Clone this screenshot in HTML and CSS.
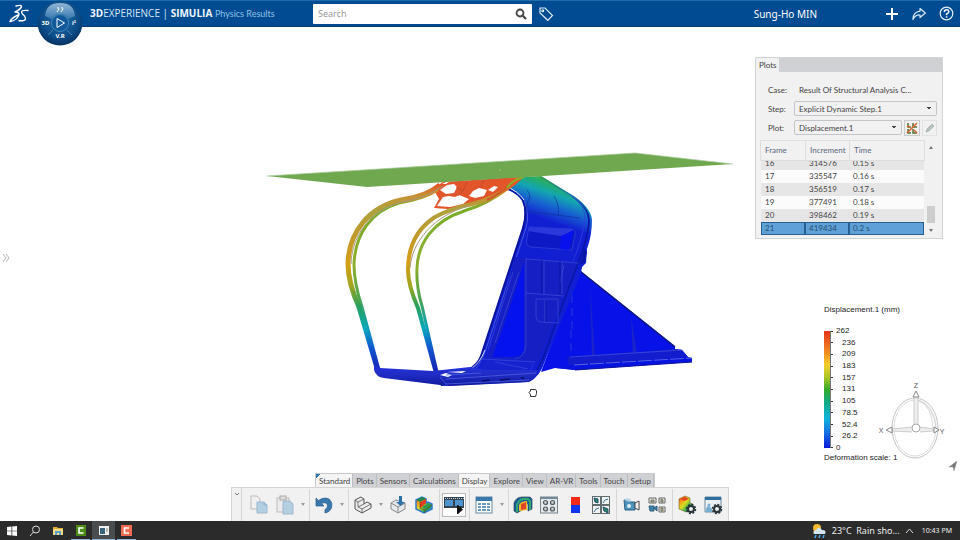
FILE: index.html
```html
<!DOCTYPE html>
<html lang="en">
<head>
<meta charset="utf-8">
<title>3DEXPERIENCE | SIMULIA Physics Results</title>
<link rel="stylesheet" href="styles.css">
</head>
<body>
<header class="topbar">
  <div class="brand">
    <svg class="logo" width="20" height="20" viewBox="0 0 20 20" fill="none" stroke="#fff" stroke-width="1.400" stroke-linecap="round" stroke-linejoin="round"><path d="M7 2Q12.500 .5 12.500 2.500Q12 5 6 8Q11.500 8 9.500 12Q6.500 17 1 17.500Q3 13.500 9 11"/><path d="M19 6.500Q12.500 6 12.500 8Q12.500 9.500 15.500 12Q18 16 14 16.800H10"/></svg>
    <h1 class="title"><b>3D</b>EXPERIENCE | <b>SIMULIA</b> <span class="app">Physics Results</span></h1>
    <button class="compass" aria-label="Compass">
      <svg width="46" height="46" viewBox="0 0 46 46">
        <defs>
          <radialGradient id="ball" cx=".5" cy=".4" r=".6"><stop offset="0" stop-color="#2272ac"/><stop offset=".7" stop-color="#0c4c88"/><stop offset="1" stop-color="#063262"/></radialGradient>
          <linearGradient id="shine" x1="0" y1="0" x2="0" y2="1"><stop offset="0" stop-color="#a7c8e2"/><stop offset="1" stop-color="#3c7db2"/></linearGradient>
        </defs>
        <circle cx="23" cy="23" r="22.500" fill="url(#ball)"/>
        <path d="M8 16Q9 3 23 3T38 16L31 19Q29 14 23 14T15 19Z" fill="url(#shine)" opacity=".85"/>
        <circle cx="23" cy="23" r="8.500" fill="#11599a" stroke="#4f92c4" stroke-width=".8"/>
        <path d="M11 35L16 30M35 35L30 30" stroke="#4f92c4" stroke-width=".8"/>
        <path d="M20 18.500L27.500 23L20 27.500Z" fill="none" stroke="#fff"/>
        <path d="M20 8Q22 7 22 9L20 12M24 8Q26 7 26 9L24 12" fill="none" stroke="#fff"/>
        <g class="ball-text"><text x="8.500" y="25">3D</text><text x="37" y="25">i²</text><text x="23" y="38">V.R</text></g>
      </svg>
    </button>
  </div>
  <form class="search">
    <input type="search" placeholder="Search" aria-label="Search">
    <button type="button" aria-label="Run search"><svg width="12" height="12" viewBox="0 0 12 12" fill="none" stroke="#444"><circle cx="5" cy="5" r="3.500" stroke-width="1.800"/><path d="M7.800 7.800L11 11" stroke-width="2.200"/></svg></button>
  </form>
  <button class="icon-btn tag" aria-label="Tags"><svg width="16" height="16" viewBox="0 0 16 16" fill="none" stroke="#d9ecfa" stroke-width="1.200"><path d="M2 2L7 2L14.500 9.500L9.800 14.300L2 7Z"/><circle cx="4.800" cy="4.700" r=".9"/></svg></button>
  <div class="account">
    <span class="user">Sung-Ho MIN</span>
    <button class="icon-btn" aria-label="Add"><svg width="14" height="14" viewBox="0 0 14 14" stroke="#fff" stroke-width="2"><path d="M7 1V13M1 7H13"/></svg></button>
    <button class="icon-btn" aria-label="Share"><svg width="14" height="14" viewBox="0 0 14 14" fill="none" stroke="#d9ecfa" stroke-width="1.200" stroke-linejoin="round"><path d="M8 1.500L13.300 6L8 10.500V8Q3.500 7.500 1 12.500Q1 5 8 4.200Z"/></svg></button>
    <button class="icon-btn" aria-label="Help"><svg width="15" height="15" viewBox="0 0 15 15" fill="none" stroke="#e6f3fc" stroke-width="1.200"><circle cx="7.500" cy="7.500" r="6.300"/><path d="M5.300 6Q5.300 3.700 7.600 3.700T9.800 5.800Q9.800 7 7.600 8V9.300M7.600 10.300V11.800" stroke-width="1.600"/></svg></button>
  </div>
</header>

<main class="workspace">
  <button class="expander" aria-label="Open side panel"><svg width="8" height="10" viewBox="0 0 8 10" fill="none" stroke="#b4b4b4"><path d="M1 1L4 5L1 9M4 1L7 5L4 9"/></svg></button>
  <div class="scene">
    <svg width="480" height="260" viewBox="260 145 480 260" role="img" aria-label="Displacement plot of the seat model">
      <defs>
        <linearGradient id="rail" gradientUnits="userSpaceOnUse" x1="0" y1="184" x2="0" y2="372">
          <stop offset="0" stop-color="#e45324"/><stop offset=".06" stop-color="#c89030"/><stop offset=".14" stop-color="#aea13c"/><stop offset=".28" stop-color="#c1992c"/><stop offset=".42" stop-color="#d69e16"/><stop offset=".54" stop-color="#a2a51e"/><stop offset=".65" stop-color="#27a25b"/><stop offset=".77" stop-color="#07a7bd"/><stop offset=".87" stop-color="#1158cf"/><stop offset="1" stop-color="#1720b5"/>
        </linearGradient>
        <linearGradient id="rail-in" gradientUnits="userSpaceOnUse" x1="0" y1="190" x2="0" y2="372">
          <stop offset="0" stop-color="#d98b28"/><stop offset=".1" stop-color="#78ad28"/><stop offset=".42" stop-color="#8cae2c"/><stop offset=".6" stop-color="#4ba552"/><stop offset=".75" stop-color="#0aa0b5"/><stop offset=".87" stop-color="#1158cf"/><stop offset="1" stop-color="#1720b5"/>
        </linearGradient>
        <linearGradient id="seat" gradientUnits="userSpaceOnUse" x1="543" y1="174" x2="529" y2="214">
          <stop offset="0" stop-color="#55ab35"/><stop offset=".17" stop-color="#25ad6b"/><stop offset=".38" stop-color="#13a5b2"/><stop offset=".64" stop-color="#1767ce"/><stop offset="1" stop-color="#111fd2"/>
        </linearGradient>
        <linearGradient id="edge" gradientUnits="userSpaceOnUse" x1="0" y1="178" x2="0" y2="215"><stop offset="0" stop-color="#2a9a55"/><stop offset=".5" stop-color="#1a78b4"/><stop offset="1" stop-color="#0a16a6"/></linearGradient>
        <linearGradient id="tube" x1="0" y1="0" x2="0" y2="1"><stop offset="0" stop-color="#2634da"/><stop offset=".45" stop-color="#202bc4"/><stop offset="1" stop-color="#101a9c"/></linearGradient>
      </defs>
      <!-- base wedge -->
      <path d="M579 270L675 346V349L682 350L688 357L692 358V362L575 370L555 368L541 372Z" fill="#0612e8"/>
      <path d="M580 271L675 347" stroke="#101878" stroke-width="1.400"/>
      <path d="M590 282L595 358L600 364L592 363ZM631 315L637 354L643 360L633 360Z" fill="#1a24c9"/>
      <path d="M567 357L675 349L682 350L688 357L569 366Z" fill="#131dcd"/>
      <path d="M570 357L682 350" stroke="#4656dd" stroke-width=".7"/>
      <path d="M573 365L692 358V362L575 370L556 368Z" fill="#0713e0"/>
      <path d="M574 365L692 358" stroke="#6c7ade" stroke-width=".8" stroke-dasharray="14 2"/>
      <path d="M575 370L692 362" stroke="#10169a"/>
      <path d="M572 282V329M571 330V356" stroke="#2b3bd6" stroke-width="1" stroke-dasharray="8 5"/>
      <!-- seat shell -->
      <path d="M505 187Q512 180 520 177L541 176Q558 187 572 195Q591 207 592 220Q592 235 587 249L586 263L582 267L581 273L545 361Q540 377 529 382L441 386L437 371L470 368Q479 362 482 352L522 230Q527 212 522 201Q518 194 505 188Z" fill="url(#seat)"/>
      <path d="M541 177L572 196Q589 207 589 222Q588 235 582 252L550 339Q539 372 532 376" fill="none" stroke="url(#edge)" stroke-width="1.800"/>
      <path d="M572 196Q586 207 585 220Q583 233 577 251L543 340Q534 367 526 376" fill="none" stroke="#2e40dd" stroke-width=".8"/>
      <path d="M505 188Q518 192 523 200Q528 212 523 228L481 356Q478 365 468 370" fill="none" stroke="#0a149f" stroke-width="2"/>
      <path d="M505 186Q518 191 524 200" fill="none" stroke="#e8f2fb" stroke-width="1"/>
      <path d="M524 200Q530 215 526 228L485 352Q480 365 474 370" fill="none" stroke="#4a5edb" stroke-width=".9"/>
      <path d="M485 350Q480 363 471 369" fill="none" stroke="#dfe5fa" stroke-width=".9"/>
      <path d="M530 197Q526 202 526 211L580 218M554 196Q560 206 558 216M527 190Q530 193 530 198" fill="none" stroke="#0e2c99" stroke-width=".6"/>
      <path d="M529 227L570 229Q577 230 575 235L572 250L531 247Q525 246 527 238Z" fill="#0c19c5" stroke="#2e42d2" stroke-width=".8"/>
      <path d="M529 227L574 229L568 235L560 236L528 231Z" fill="#2b39db"/>
      <path d="M561 236L574 230L569 250L560 249Z" fill="#0710ee"/>
      <path d="M515 257L578 262L551 329L538 362L487 359Z" fill="#151fc4"/>
      <path d="M524 262V347Q524 356 515 357L492 357Q506 322 524 262Z" fill="#0413ee"/>
      <path d="M526 258V345Q525 357 515 359M526 259L578 263M526 293L564 296M544 260V294M562 261V294M564 265L560 283M536 299H558V323L540 322Q536 321 536 317ZM545 300V322" fill="none" stroke="#3040d2" stroke-width="1"/>
      <path d="M542 260V294M560 261V294M546 301V322" stroke="#0b139b" stroke-width=".8"/>
      <path d="M487 357L538 361L523 372L476 370Z" fill="#1522ce"/>
      <path d="M482 359L535 362M495 362L528 369M513 272L488 350M519 272L495 343" fill="none" stroke="#3d4cdc" stroke-width=".7"/>
      <path d="M584 248L587 252L585 262L580 265Z" fill="#0b14a9"/>
      <!-- mesh -->
      <path fill="#e2542a" d="M432 189L443 182L518 177Q508 187 494 195Q477 203 462 206L448 209L434 208L439 199L435 192Z"/>
      <g fill="#fff">
        <path d="M440 190L447 185L454 184L457 187L454 193L446 194Z"/>
        <path d="M437 206L443 197L449 196L455 197L459 195L469 199L463 204L450 207Z"/>
        <path d="M469 196L473 191L479 188L487 190L484 196L475 198Z"/>
        <path d="M488 190L494 186L498 187L493 192Z"/>
        <path d="M442 184L446 182L449 182L446 184Z"/>
      </g>
      <path d="M456 187L463 191L467 182M463 191L458 196M480 187L484 180" fill="none" stroke="#b5452a" stroke-width=".7"/>
      <!-- roll rails -->
      <g fill="none">
        <path d="M438 190Q423 199 399 203C371 211 355 235 354 264Q354 283 362 307L379 370" stroke="url(#rail-in)" stroke-width="3"/>
        <path d="M440 185Q426 197 401 200C369 207 349 232 348 263Q348 283 359 307L378 371" stroke="url(#rail)" stroke-width="5"/>
        <path d="M443 186Q426 198 402 202C371 210 352 234 351 264" stroke="#a79a7d" stroke-width="1"/>
        <path d="M513 184Q491 203 464 211C433 221 418 243 417 268Q416 286 422 306L437 372" stroke="url(#rail-in)" stroke-width="3"/>
        <path d="M520 178Q500 197 472 204Q452 208 435 217C415 230 408 250 408 270Q408 285 418 308L436 373" stroke="url(#rail)" stroke-width="4"/>
        <path d="M468 206C434 216 412 241 410 268" stroke="#a79a7d" stroke-width="1"/>
        <path d="M511 184Q500 194 487 200" stroke="#d05b27" stroke-width="2"/>
        <path d="M507 188Q512 180 524 177" stroke="#8bae25" stroke-width="2"/>
      </g>
      <!-- floor frame -->
      <path d="M374 366L380 368L433 371L470 367L486 370L538 370Q535 381 527 382L450 386L440 385L384 378Q376 377 374 370Z" fill="url(#tube)"/>
      <path d="M440 375L446 373L452 375L448 377ZM447 372L466 371L462 373Z" fill="#fff"/>
      <path d="M446 379L536 373M440 377L446 384M445 384L529 380M446 375L481 373" stroke="#4e5fde" stroke-width=".8"/>
      <path d="M482 381L490 380M500 380L510 379M521 378L524 378" stroke="#090e68" stroke-width="1.400"/>
      <!-- plane -->
      <path d="M267 176L635 153L733 164L367 187Z" fill="#70a84f"/>
      <path d="M267 176L635 153L733 164" fill="none" stroke="#a5c99a" stroke-width=".7"/>
      <circle cx="500" cy="170" r=".7" fill="#b6c98e"/>
      <!-- grab cursor -->
      <path d="M530.500 396.500V394.500L529 392.500L530.500 391V389.500H535.500L536.500 391V393.500L535.500 396.500Z" fill="#fff" stroke="#333" stroke-width="1" stroke-linejoin="round"/>
    </svg>
  </div>

  <aside class="side">
    <section class="panel">
      <div class="panel-bar"><h2 class="panel-tab">Plots</h2></div>
      <div class="panel-body">
        <div class="field"><span>Case:</span><span class="case">Result Of Structural Analysis C...</span></div>
        <div class="field"><label for="step">Step:</label><select id="step"><option>Explicit Dynamic Step.1</option></select></div>
        <div class="field"><label for="plot">Plot:</label><select id="plot"><option>Displacement.1</option></select>
          <button class="tool" aria-label="Plot options"><svg width="14" height="14" viewBox="0 0 14 14" fill="none"><path d="M3 2V6H6M8 2V6H12M3 8V12H6M8 8V12H12" stroke="#4e7139" stroke-width="1.500"/><path d="M2 12L12 2M2 5L5 6M9 9L12 12" stroke="#e05f2c" stroke-width="1.500"/></svg></button>
          <button class="tool" aria-label="Edit plot"><svg width="12" height="12" viewBox="0 0 12 12"><path d="M2 10L3 7L8 2L10 4L5 9Z" fill="#b7c3c3" stroke="#92a0a0" stroke-width=".6"/></svg></button>
        </div>
        <div class="frames">
          <table>
            <thead><tr><th>Frame</th><th>Increment</th><th>Time</th></tr></thead>
            <tbody>
              <tr class="odd"><td>16</td><td>314576</td><td>0.15 s</td></tr>
              <tr><td>17</td><td>335547</td><td>0.16 s</td></tr>
              <tr class="odd"><td>18</td><td>356519</td><td>0.17 s</td></tr>
              <tr><td>19</td><td>377491</td><td>0.18 s</td></tr>
              <tr class="odd"><td>20</td><td>398462</td><td>0.19 s</td></tr>
              <tr class="selected"><td>21</td><td>419434</td><td>0.2 s</td></tr>
            </tbody>
          </table>
          <div class="scroll"><i class="up"></i><i class="thumb"></i><i class="down"></i></div>
        </div>
      </div>
    </section>

    <section class="legend">
      <h2>Displacement.1 (mm)</h2>
      <div class="scale">
        <div class="ramp"></div>
        <ol><li class="end">262</li><li>236</li><li>209</li><li>183</li><li>157</li><li>131</li><li>105</li><li>78.5</li><li>52.4</li><li>26.2</li><li class="end">0</li></ol>
      </div>
      <svg class="rose" width="80" height="92" viewBox="878 380 80 92" fill="none" stroke="#c4c4c4">
        <ellipse cx="915" cy="428" rx="23" ry="30"/><ellipse cx="915" cy="428" rx="21" ry="28" stroke="#dcdcdc"/>
        <path d="M917 400Q932 405 933 428M919 400Q934 408 936 428" stroke="#cfcfcf" stroke-width=".8"/>
        <path d="M914 425V397H918V425M912 427L892 429V431L912 432M920 427L934 429V431L920 432" fill="#eee" stroke="#c2c2c2" stroke-width=".8"/>
        <path d="M916 391L919 397H913ZM886 430L892 427V433ZM939 430L934 427V433Z" fill="#fff" stroke="#888"/>
        <circle cx="916" cy="428" r="4" fill="#fff" stroke="#aaa"/>
        <g class="axis"><text x="916" y="388">Z</text><text x="881" y="433">X</text><text x="942" y="434">Y</text></g>
        <path d="M949 467L957 461L954 471L953 467Z" fill="#777" stroke="#999" stroke-width=".5"/>
      </svg>
      <p>Deformation scale: 1</p>
    </section>
  </aside>
</main>

<section class="dock">
  <nav class="tabs">
    <button class="light first">Standard</button><button>Plots</button><button>Sensors</button><button>Calculations</button><button class="light">Display</button><button>Explore</button><button>View</button><button>AR-VR</button><button>Tools</button><button>Touch</button><button>Setup</button>
  </nav>
  <div class="toolbar">
    <button class="fold" aria-label="Collapse"><svg width="6" height="4" viewBox="0 0 6 4" fill="none" stroke="#777"><path d="M1 1L3 3L5 1"/></svg></button>
    <button aria-label="Copy"><svg width="20" height="20" viewBox="0 0 20 20"><path d="M2 1H8L11 4V14H2Z" fill="#f0f0f0" stroke="#bbb"/><path d="M8 7H15L18 10V18H8Z" fill="#b5cfe2" stroke="#9ab8cf"/><path d="M15 7V10H18" fill="none" stroke="#8fb0c9"/></svg></button>
    <button aria-label="Paste"><svg width="20" height="20" viewBox="0 0 20 20"><rect x="2" y="3" width="12" height="14" fill="#ececec" stroke="#bbb"/><rect x="5" y="1" width="6" height="4" fill="#ddd" stroke="#aaa"/><path d="M8 6H15L18 9V19H8Z" fill="#b5cfe2" stroke="#9ab8cf"/></svg></button>
    <button class="more" aria-label="Paste options"></button><i class="sep"></i>
    <button aria-label="Undo"><svg width="20" height="20" viewBox="0 0 20 20"><path d="M2 3L4.500 5.500Q10 1.500 15 4Q19.500 8 17 14Q15 17.500 11 18V14.500Q14 13 13.500 10Q12 6.500 7.500 8.500L10 11H2Z" fill="#3b79ad" stroke="#285d8c" stroke-width=".7"/></svg></button>
    <button class="more" aria-label="Undo options"></button><i class="sep"></i>
    <button aria-label="Part"><svg width="20" height="20" viewBox="0 0 20 20" fill="#ededed" stroke="#555" stroke-linejoin="round"><path d="M2 5L8 2L11 4V9L14 7L18 9V13L9 18L2 14Z"/><path d="M2 5L5 7L11 4M5 7V12L9 14L18 9M9 14V18M5 12L11 9" fill="none" stroke-width=".8"/></svg></button>
    <button class="more" aria-label="Part options"></button>
    <button aria-label="Import"><svg width="20" height="20" viewBox="0 0 20 20"><path d="M3 8L8 5L17 8V14L10 18L3 14Z" fill="#e5e8ea" stroke="#888"/><path d="M3 8L10 12L17 8M10 12V18" fill="none" stroke="#888"/><path d="M11 1H14V7H17L12.500 11L8 7H11Z" fill="#2d72a8"/></svg></button>
    <button aria-label="Contour plot"><svg width="20" height="20" viewBox="0 0 20 20"><defs><linearGradient id="contour" x1="0" y1="0" x2="1" y2="1"><stop offset="0" stop-color="#ef2e18"/><stop offset=".25" stop-color="#f5a21a"/><stop offset=".45" stop-color="#d9dc23"/><stop offset=".7" stop-color="#26a852"/><stop offset="1" stop-color="#176dc6"/></linearGradient></defs><path d="M2 5L8 2L12 4V8L14 7L18 9V14L10 18L2 14Z" fill="url(#contour)" stroke="#2b7ad0" stroke-width="1.500"/><path d="M2 5L8 2L12 4L6 7Z" fill="#238a4b"/><path d="M6 7L12 4V8L8 12L6 13Z" fill="#e43d22"/><path d="M8 12L14 8L18 10L11 14Z" fill="#2c9c4c"/><path d="M6 7V13L11 15L18 10M11 15V18" fill="none" stroke="#6b3a17" stroke-width=".7"/></svg></button>
    <i class="sep"></i>
    <button class="picked" aria-label="Animate"><svg width="20" height="20" viewBox="0 0 20 20"><rect x="0" y="2" width="20" height="11" fill="#364451"/><path d="M1 5H9V11H1ZM11 5H19V11H11Z" fill="#4d94cf"/><path d="M1 3.500H20" stroke="#b9cfe2" stroke-dasharray="1 1"/><path d="M13 10H14V19H13ZM14 10L19 14.500L14 19Z" fill="#111"/></svg></button>
    <i class="sep"></i>
    <button aria-label="Table"><svg width="20" height="20" viewBox="0 0 20 20"><rect x="2" y="2" width="16" height="16" fill="#fff" stroke="#68889f"/><path d="M2 2H18V6H2Z" fill="#3879ab"/><path d="M4 9H7M4 12H7M4 15H7M8 9H12M8 12H12M8 15H12M13 9H16M13 12H16M13 15H16" stroke="#3879ab" stroke-width="1.500"/></svg></button>
    <button class="more" aria-label="Table options"></button><i class="sep"></i>
    <button aria-label="Section plot"><svg width="20" height="20" viewBox="0 0 20 20"><path d="M1 8Q3 2 9 2H17L19 4V14L15 16V9L12 8Q9 10 9 15L4 18L1 16Z" fill="#1a5d98" stroke="#314852" stroke-width=".7"/><path d="M4 17V10Q6 5 10 4H15L17 6V15" fill="none" stroke="#31a86e" stroke-width="2"/><path d="M6 16V10Q8 6 14 6V15Z" fill="#f2bd24"/><path d="M8 15V9L13 7V14Z" fill="#df4529"/></svg></button>
    <button aria-label="Layout"><svg width="20" height="20" viewBox="0 0 20 20"><rect x="1.500" y="2" width="17" height="16" fill="#e6e9ec" stroke="#77858e"/><path d="M2 3H18" stroke="#708899" stroke-width="2"/><g fill="#ccc" stroke="#4c5960" stroke-width="1.200"><circle cx="6.500" cy="7.500" r="2"/><circle cx="13.500" cy="7.500" r="2"/><circle cx="6.500" cy="14" r="2"/><circle cx="13.500" cy="14" r="2"/></g></svg></button>
    <button aria-label="Range colours"><svg width="20" height="20" viewBox="0 0 20 20"><path d="M6 2H15V10H6Z" fill="#f32a15"/><path d="M6 10H15V18H6Z" fill="#0f35ec"/></svg></button>
    <button aria-label="Views"><svg width="20" height="20" viewBox="0 0 20 20"><rect x="1" y="1" width="18" height="18" fill="#626d70"/><path d="M2 2H9V9H2ZM11 2H18V9H11ZM2 11H9V18H2ZM11 11H18V18H11Z" fill="#f1f3f2"/><path d="M3 3L7 4V8L4 7ZM12 12L17 14V18L13 16Z" fill="#27865c" stroke="#234e7a"/><path d="M12 8L14 5L17 4M3 17L5 14L8 13" fill="none" stroke="#3f7294"/></svg></button>
    <i class="sep"></i>
    <button aria-label="Camera"><svg width="20" height="20" viewBox="0 0 20 20"><path d="M3 5H8L9 7H14V15H4Z" fill="#4d91bd" stroke="#2c5f82"/><path d="M14 8L18 6V15L14 13Z" fill="#f3f3f3" stroke="#444"/><path d="M3 5L6 3L10 4L9 7" fill="#b9d4e5"/><circle cx="8" cy="11" r="2" fill="#e1edf4"/></svg></button>
    <button aria-label="Saved views"><svg width="20" height="20" viewBox="0 0 20 20" fill="#eee" stroke="#666"><path d="M2 3H9V8H2ZM12 3H18V8H12ZM12 12H18V17H12Z"/><path d="M4 5H7V7H4ZM14 4L16 5V7H14ZM14 13H16V16H14Z" fill="#aab19b" stroke="#77745c"/><path d="M2 11H7V16H3ZM7 13L10 11V16Z" fill="#3e82ae" stroke="#315e78"/></svg></button>
    <i class="sep"></i>
    <button aria-label="Result options"><svg width="20" height="20" viewBox="0 0 20 20"><path d="M2 4L8 1L13 3V8L16 9V13L9 17L2 14Z" fill="url(#contour)" stroke="#756637" stroke-width=".6"/><path d="M3 4L8 2L12 4L7 6Z" fill="#e74120"/><circle cx="14" cy="14" r="3" fill="#eee" stroke="#293439" stroke-width="2"/><circle cx="14" cy="14" r="4.500" fill="none" stroke="#293439" stroke-width="1.500" stroke-dasharray="2 1.500"/></svg></button>
    <button aria-label="Display options"><svg width="20" height="20" viewBox="0 0 20 20"><path d="M2 2H18V17H2Z" fill="#eaf0f4" stroke="#71899c"/><path d="M2 2H18V5H2Z" fill="#2d6e9f"/><path d="M3 16Q3 11 6 11L9 14V17H3Z" fill="#77afd2"/><circle cx="6" cy="10" r="1.500" fill="#77afd2"/><circle cx="14" cy="14" r="3" fill="#eee" stroke="#293439" stroke-width="2"/><circle cx="14" cy="14" r="4.500" fill="none" stroke="#293439" stroke-width="1.500" stroke-dasharray="2 1.500"/></svg></button>
  </div>
</section>

<footer class="taskbar">
  <button aria-label="Start"><svg width="10" height="10" viewBox="0 0 10 10" fill="#fff"><path d="M0 1L4.500 .5V4.700H0ZM5.200 .4L10 0V4.700H5.200ZM0 5.300H4.500V9.500L0 9ZM5.200 5.300H10V10L5.200 9.600Z"/></svg></button>
  <button aria-label="Search"><svg width="12" height="12" viewBox="0 0 12 12" fill="none" stroke="#ddd"><circle cx="7" cy="4.500" r="3.500"/><path d="M4.500 7L1 11"/></svg></button>
  <button aria-label="Files"><svg width="10" height="10" viewBox="0 0 10 10"><path d="M0 1H4L5 2H10V9H0Z" fill="#e3ac39"/><path d="M0 3H10V9H0Z" fill="#f7dc86"/><path d="M2 5H8V9H6V7H4V9H2Z" fill="#5f9fca"/></svg></button>
  <button class="open" aria-label="Recorder"><svg width="10" height="11" viewBox="0 0 10 11"><rect width="10" height="11" fill="#4e8b14"/><path d="M7.500 3H3V8H7.500" fill="none" stroke="#fff" stroke-width="1.600"/></svg></button>
  <button class="open active" aria-label="Physics Results"><svg width="10" height="9" viewBox="0 0 10 9"><rect width="10" height="9" fill="#eee"/><rect x="1" y="2" width="5" height="6" fill="#38647c"/><path d="M7 3H9M7 5H9" stroke="#888"/></svg></button>
  <button class="open" aria-label="Editor"><svg width="11" height="11" viewBox="0 0 11 11"><rect width="11" height="11" fill="#f16b50"/><path d="M8 3H3.500V8H8" fill="none" stroke="#fff" stroke-width="1.600"/></svg></button>
  <div class="tray">
    <svg width="16" height="16" viewBox="0 0 16 16"><circle cx="6" cy="5" r="4" fill="#f5b931"/><path d="M3 11Q1 8 5 7Q8 2 11 7Q16 7 14 11Z" fill="#d2e5f5"/><path d="M5 12L4 15M9 12L8 15M13 12L12 15" stroke="#46a3e6" stroke-width="1.500"/></svg>
    <span class="weather">23°C&nbsp; Rain sho...</span>
    <svg width="9" height="6" viewBox="0 0 9 6" fill="none" stroke="#ddd"><path d="M1 5L4.500 1L8 5"/></svg>
    <time>10:43 PM</time>
  </div>
</footer>
</body>
</html>
```
FILE: styles.css
```css
* { box-sizing: border-box; }
body {
  margin: 0;
  min-height: 100vh;
  display: flex;
  flex-direction: column;
  background: #fff;
  color: #444;
  font: 8px/12px Lato, "Noto Sans", sans-serif;
}
button, input, select { font: inherit; color: inherit; }
button { border: 0; padding: 0; background: none; display: grid; place-items: center; }
h1, h2, p, ol { margin: 0; padding: 0; font-weight: normal; }
svg { display: block; }

.topbar, .taskbar { font-family: "Noto Sans", sans-serif; }
.topbar {
  display: flex;
  align-items: center;
  height: 27px;
  background: #004b91;
  border-top: 1px solid #1c6cab;
  border-bottom: 1px solid #083c72;
  color: #fff;
}
.brand { position: relative; display: flex; align-items: center; width: 313px; padding-left: 9px; }
.title { margin-left: 61px; font: 10px/16px "Open Sans", sans-serif; color: #d3e9f8; white-space: nowrap; }
.title b { color: #f0f8ff; }
.app { font-family: Lato, sans-serif; font-size: 9px; color: #8fc1e4; }
.compass { position: absolute; left: 37px; top: -4px; border-radius: 50%; }
.ball-text { fill: #fff; font: bold 6px "Noto Sans", sans-serif; text-anchor: middle; }
.search { display: flex; width: 219px; height: 20px; background: #fff; border-radius: 1px; }
.search input { flex: 1; min-width: 0; border: 0; outline: 0; background: none; padding: 0 5px; font-size: 9px; }
.search input::placeholder { color: #999; }
.search button { width: 22px; }
.tag { margin-left: 6px; }
.account { display: flex; align-items: center; gap: 13px; margin-left: auto; padding-right: 6px; }
.user { margin-right: 55px; font-size: 10px; }

.workspace { flex: 1; display: grid; grid-template-columns: 15px 1fr 205px; }
.expander { align-self: center; justify-self: start; margin: 16px 0 0 2px; }
.scene { display: flex; justify-content: flex-end; align-items: flex-start; padding: 118px 15px 0 0; }
.side { padding-top: 30px; }

.panel { width: 188px; background: #f1f1f1; border: 1px solid #d2d3d5; }
.panel-bar { display: flex; background: #d0d1d4; height: 14px; }
.panel-tab { background: #f1f1f1; font-size: 8px; line-height: 14px; padding: 0 3px; }
.panel-body { padding: 8px 5px 3px 4px; }
.field { display: flex; align-items: center; gap: 2px; height: 19px; padding-left: 8px; }
.field > :first-child { width: 24px; }
.case { padding-left: 5px; }
.field select {
  flex: 1;
  min-width: 0;
  height: 15px;
  padding: 0 4px;
  border: 1px solid #c4c5c8;
  border-radius: 2px;
  appearance: none;
  background: linear-gradient(45deg, transparent 50%, #444 50%) no-repeat right 7px center / 2px 3px,
    linear-gradient(-45deg, transparent 50%, #444 50%) no-repeat right 5px center / 2px 3px, #f1f1f1;
}
.tool { width: 16px; height: 16px; border: 1px solid #ccc; }
.tool + .tool { width: 15px; border-color: #e2e2e2; }
.frames { display: flex; margin-top: 3px; }
table { flex: 1; display: block; }
thead, tbody { display: block; }
tr { display: grid; grid-template-columns: 44px 44px 1fr; }
thead { border: 1px solid #ddd; }
th { font-weight: normal; text-align: left; color: #59677d; line-height: 19px; padding: 0 0 0 4px; }
th + th { border-left: 1px solid #ddd; }
tbody { height: 74px; overflow: hidden; display: flex; flex-direction: column; justify-content: flex-end; }
tbody tr { flex: none; margin: 0 1px; background: #fbfbfb; }
td { padding: 0 4px; line-height: 13px; }
tbody .odd { background: #e6e6e6; }
.selected td { background: #5ea0d7; border: 1px solid #275f91; line-height: 11px; color: #28506f; padding: 0 3px; }
.scroll { display: flex; flex-direction: column; align-items: center; width: 12px; padding: 6px 0 3px; }
.up, .down { border: 2px solid transparent; }
.up { border-top: 0; border-bottom: 3px solid #777; }
.down { border-bottom: 0; border-top: 3px solid #777; margin-top: 6px; }
.thumb { width: 8px; height: 17px; margin-top: auto; background: #cdcdcd; }

.legend {
  display: grid;
  grid-template-columns: 54px 1fr;
  grid-template-rows: 12px 11px 125px auto;
  margin: 65px 0 0 69px;
  color: #222;
  font: 8px/12px "Liberation Sans", sans-serif;
}
.legend h2 { grid-column: 1 / 3; font-size: 8px; }
.scale { grid-area: 3 / 1; display: flex; }
.ramp {
  width: 7px;
  margin: 4px 0;
  border-right: 1px solid #777;
  background: linear-gradient(#e8321b, #f08a20 18%, #f6cf2c 29%, #a5c322 40%, #35aa2b 50%, #12aa86 61%, #10b2dc 75%, #146fe0 87%, #0b16d8);
}
.scale ol { display: flex; flex-direction: column; justify-content: space-between; list-style: none; line-height: 8px; }
.scale li { display: flex; align-items: center; gap: 9px; }
.scale li::before { content: ""; width: 2px; height: 1px; background: #333; }
.scale .end { gap: 3px; }
.rose { grid-area: 3 / 2 / 5 / 3; margin-top: 53px; }
.axis { fill: #555; stroke: none; font: 7px "Liberation Sans", sans-serif; text-anchor: middle; }
.legend p { grid-area: 4 / 1 / 5 / 3; }

.dock { align-self: center; width: 498px; }
.tabs { display: flex; width: max-content; margin-left: 84px; border: 1px solid #c9cacd; border-bottom: 0; }
.tabs button { height: 13px; padding: 0 2px 0 3px; background: #d0d1d4; border-right: 1px solid #bdbec1; }
.tabs .light { background: #f4f4f4; }
.tabs .first { background: linear-gradient(135deg, #2f73ad 3px, #f4f4f4 3px); }
.toolbar { display: flex; align-items: center; height: 34px; background: #f1f1f1; border: 1px solid #d5d5d5; border-bottom: 0; }
.toolbar button { width: 26px; height: 24px; }
.toolbar .fold { width: 10px; height: 33px; margin-right: 4px; padding-top: 4px; align-content: start; border-right: 1px solid #d5d5d5; }
.toolbar .more { width: 9px; }
.more::before { content: ""; border: 2px solid transparent; border-top: 3px solid #999; border-bottom: 0; }
.sep { width: 1px; height: 32px; margin: 0 1px 0 2px; background: #d5d5d5; }
.toolbar .picked { width: 24px; margin: 0 1px; background: #fff; border: 1px solid #bbb; }

.taskbar { display: flex; height: 19px; background: #2b2b2b; color: #eee; }
.taskbar > button { width: 23px; }
.taskbar .open { width: 19px; margin: 0 2px; border-bottom: 1px solid #86b9e8; }
.taskbar .active { width: 23px; margin: 0; background: #4a4d50; }
.tray { display: flex; align-items: center; gap: 5px; margin-left: auto; padding-right: 8px; }
.weather { font-size: 9px; }
time { margin-left: 3px; font-size: 7px; }
```
